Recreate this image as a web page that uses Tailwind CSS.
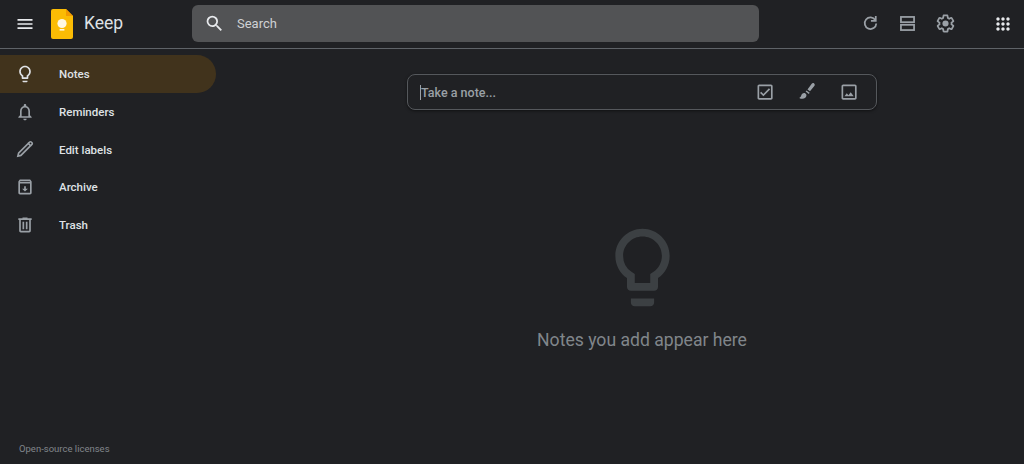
<!DOCTYPE html>
<html lang="en">
  <head>
    <meta charset="UTF-8" />
    <meta name="viewport" content="width=device-width, initial-scale=1.0" />
    <title>Keep</title>
    <script src="https://cdn.jsdelivr.net/npm/@tailwindcss/browser@4"></script>
  </head>
  <body class="m-0 h-[464px] w-[1024px] overflow-hidden bg-[#202124] font-['Roboto',sans-serif]">
    <!-- top bar -->
    <header class="flex h-[49px] items-center border-b border-[#5f6368] pb-[1px]">
      <button class="ml-[15px] flex h-5 w-5 items-center justify-center text-[#e8eaed]">
        <svg class="h-5 w-5" viewBox="0 0 24 24" fill="currentColor"><path d="M3 18h18v-2H3v2zm0-5h18v-2H3v2zm0-7v2h18V6H3z" /></svg>
      </button>
      <svg class="ml-[16px] h-[30px] w-[22px]" viewBox="0 0 22 30">
        <path d="M2 0h13l7 7v21a2 2 0 0 1-2 2H2a2 2 0 0 1-2-2V2a2 2 0 0 1 2-2z" fill="#fbbc04" />
        <path d="M15 0l7 7h-7z" fill="#f29900" />
        <circle cx="11" cy="14.500" r="4.600" fill="#fff8e1" />
        <rect x="8.600" y="20" width="4.800" height="1.600" fill="#fff8e1" />
      </svg>
      <span class="ml-[11px] w-[108px] text-[17.5px] leading-none text-[#dfe1e5]">Keep</span>
      <div class="flex h-[37px] w-[567px] items-center rounded-[6px] bg-[#525355]">
        <svg class="ml-[12px] h-[21px] w-[21px] text-[#e8eaed]" viewBox="0 0 24 24" fill="currentColor"><path d="M15.500 14h-.79l-.28-.27A6.470 6.470 0 0 0 16 9.500 6.500 6.500 0 1 0 9.500 16c1.610 0 3.090-.59 4.230-1.570l.27.28v.79l5 4.990L20.490 19l-4.990-5zm-6 0C7.010 14 5 11.990 5 9.500S7.010 5 9.500 5 14 7.010 14 9.500 11.990 14 9.500 14z" /></svg>
        <span class="ml-[12px] text-[13px] text-[#cfd1d4]">Search</span>
      </div>
      <div class="ml-[100.500px] flex items-center gap-[16.500px] text-[#9aa0a6]">
        <svg class="h-[21px] w-[21px]" viewBox="0 0 24 24" fill="none" stroke="currentColor" stroke-width="2"><path d="M17.600 8.200A6.600 6.600 0 1 0 18.600 12" /><path d="M18 3.500v5.500h-5.500" fill="none" /></svg>
        <svg class="h-[21px] w-[21px]" viewBox="0 0 24 24" fill="none" stroke="currentColor" stroke-width="2"><rect x="4.500" y="4.500" width="15" height="6" /><rect x="4.500" y="13.500" width="15" height="6" /></svg>
        <svg class="h-[21px] w-[21px]" viewBox="0 0 24 24" fill="currentColor"><path d="M13.850 22.250h-3.700c-.74 0-1.360-.54-1.450-1.270l-.27-1.890c-.27-.14-.53-.29-.79-.46l-1.800.72c-.7.26-1.470-.03-1.810-.65L2.200 15.530c-.35-.66-.2-1.440.36-1.880l1.530-1.190c-.01-.15-.02-.3-.02-.46 0-.15.01-.31.02-.46l-1.520-1.190c-.59-.45-.74-1.260-.37-1.880l1.850-3.190c.34-.62 1.110-.9 1.790-.63l1.810.73c.26-.17.52-.32.78-.46l.27-1.910c.09-.7.71-1.250 1.440-1.250h3.700c.74 0 1.360.54 1.450 1.270l.27 1.890c.27.14.53.29.79.46l1.800-.72c.71-.26 1.480.03 1.820.65l1.840 3.180c.36.66.2 1.440-.36 1.880l-1.520 1.190c.01.15.02.3.02.46s-.01.31-.02.46l1.520 1.190c.56.45.72 1.230.37 1.860l-1.860 3.220c-.34.62-1.110.9-1.800.63l-1.800-.72c-.26.17-.52.32-.78.46l-.27 1.910c-.1.68-.72 1.220-1.460 1.220zm-3.230-2h2.760l.37-2.550.53-.22c.44-.18.88-.44 1.340-.78l.45-.34 2.380.96 1.380-2.400-2.030-1.580.07-.56c.03-.26.06-.51.06-.78s-.03-.53-.06-.78l-.07-.56 2.030-1.580-1.390-2.400-2.390.96-.45-.35c-.42-.32-.87-.58-1.330-.77l-.52-.22-.37-2.550h-2.760l-.37 2.550-.53.21c-.44.19-.88.44-1.340.79l-.45.33-2.380-.95-1.390 2.390 2.030 1.580-.07.56a7 7 0 0 0-.06.79c0 .26.02.53.06.78l.07.56-2.030 1.580 1.380 2.400 2.390-.96.45.35c.43.33.86.58 1.330.77l.53.22.38 2.550z" /><circle cx="12" cy="12" r="3.500" /></svg>
      </div>
      <svg class="ml-[37.500px] h-5 w-5 text-[#e8eaed]" viewBox="0 0 24 24" fill="currentColor"><path d="M6 8c1.100 0 2-.9 2-2s-.9-2-2-2-2 .9-2 2 .9 2 2 2zm6 12c1.100 0 2-.9 2-2s-.9-2-2-2-2 .9-2 2 .9 2 2 2zm-6 0c1.100 0 2-.9 2-2s-.9-2-2-2-2 .9-2 2 .9 2 2 2zm0-6c1.100 0 2-.9 2-2s-.9-2-2-2-2 .9-2 2 .9 2 2 2zm6 0c1.100 0 2-.9 2-2s-.9-2-2-2-2 .9-2 2 .9 2 2 2zm4-8c0 1.100.9 2 2 2s2-.9 2-2-.9-2-2-2-2 .9-2 2zm-4 2c1.100 0 2-.9 2-2s-.9-2-2-2-2 .9-2 2 .9 2 2 2zm6 6c1.100 0 2-.9 2-2s-.9-2-2-2-2 .9-2 2 .9 2 2 2zm0 6c1.100 0 2-.9 2-2s-.9-2-2-2-2 .9-2 2 .9 2 2 2z" /></svg>
    </header>

    <div class="flex h-[415px]">
      <!-- sidebar -->
      <aside class="flex w-[216px] shrink-0 flex-col pt-[6px]">
        <nav class="flex flex-col text-[11.500px] font-medium text-[#dfe1e5]">
          <a class="flex h-[38px] items-center rounded-r-full bg-[#41331c]">
            <svg class="ml-[15px] h-5 w-5" viewBox="0 0 24 24" fill="currentColor"><path d="M9 21c0 .55.45 1 1 1h4c.55 0 1-.45 1-1v-1H9v1zm3-19C8.140 2 5 5.140 5 9c0 2.380 1.190 4.470 3 5.740V17c0 .55.45 1 1 1h6c.55 0 1-.45 1-1v-2.260c1.810-1.270 3-3.360 3-5.740 0-3.860-3.140-7-7-7zm2.850 11.100l-.85.6V16h-4v-2.300l-.85-.6A4.997 4.997 0 0 1 7 9c0-2.760 2.240-5 5-5s5 2.240 5 5c0 1.630-.8 3.160-2.150 4.100z" /></svg>
            <span class="ml-[24px] pt-[2px]">Notes</span>
          </a>
          <a class="flex h-[37.600px] items-center">
            <svg class="ml-[15px] h-5 w-5 text-[#9aa0a6]" viewBox="0 0 24 24" fill="currentColor"><path d="M12 22c1.100 0 2-.9 2-2h-4c0 1.100.9 2 2 2zm6-6v-5c0-3.070-1.630-5.640-4.500-6.320V4c0-.83-.67-1.500-1.500-1.500s-1.500.67-1.500 1.500v.68C7.640 5.360 6 7.920 6 11v5l-2 2v1h16v-1l-2-2zm-2 1H8v-6c0-2.480 1.510-4.500 4-4.500s4 2.020 4 4.500v6z" /></svg>
            <span class="ml-[24px] pt-[2px]">Reminders</span>
          </a>
          <a class="flex h-[37.600px] items-center">
            <svg class="ml-[14px] h-[22px] w-[22px] text-[#9aa0a6]" viewBox="0 0 24 24" fill="none" stroke="currentColor" stroke-width="1.800"><path d="M5 16.500 15.600 5.900l2.500 2.500L7.500 19l-3.300.8z" /><path d="M15.600 5.900l1.500-1.500a1.200 1.200 0 0 1 1.700 0l.8.8a1.200 1.200 0 0 1 0 1.700l-1.500 1.500" /></svg>
            <span class="ml-[23px] pt-[2px]">Edit labels</span>
          </a>
          <a class="flex h-[37.600px] items-center">
            <svg class="ml-[15px] h-5 w-5 text-[#9aa0a6]" viewBox="0 0 24 24" fill="currentColor"><path d="M20 5.500 18.700 3.600C18.400 3.200 18 3 17.500 3h-11c-.5 0-.9.2-1.200.6L4 5.500V19c0 1.100.9 2 2 2h12c1.100 0 2-.9 2-2V5.500zM6.500 4.800h11l.7 1H5.800zM6 19V7.800h12V19H6zm7-8h-2v3H8.500l3.500 3.500 3.500-3.500H13v-3z" /></svg>
            <span class="ml-[24px] pt-[2px]">Archive</span>
          </a>
          <a class="flex h-[37.600px] items-center">
            <svg class="ml-[15px] h-5 w-5 text-[#9aa0a6]" viewBox="0 0 24 24" fill="currentColor"><path d="M15 4V3H9v1H4v2h1v13c0 1.100.9 2 2 2h10c1.100 0 2-.9 2-2V6h1V4h-5zm2 15H7V6h10v13z" /><path d="M9 8h2v9H9zm4 0h2v9h-2z" /></svg>
            <span class="ml-[24px] pt-[2px]">Trash</span>
          </a>
        </nav>
        <span class="mt-auto mb-[9px] ml-[19px] text-[9.500px] leading-[12px] text-[#80868b]">Open-source licenses</span>
      </aside>

      <!-- main column -->
      <main class="flex flex-1 flex-col items-center pl-[44px] pt-[25px]">
        <div class="flex h-[36px] w-[470px] items-center rounded-[8px] border border-[#55585c] bg-[#202124] shadow-[0_1px_3px_rgba(0,0,0,0.5)]">
          <span class="ml-[12px] h-[15px] w-px bg-[#9aa0a6]"></span>
          <span class="pt-[3px] text-[12.500px] font-medium text-[#9aa0a6]">Take a note...</span>
          <div class="ml-auto mr-[15px] flex items-center gap-[18px] text-[#9aa0a6]">
            <svg class="h-6 w-6" viewBox="0 0 24 24" fill="currentColor"><path d="M19 3H5c-1.100 0-2 .9-2 2v14c0 1.100.9 2 2 2h14c1.100 0 2-.9 2-2V5c0-1.100-.9-2-2-2zm0 16H5V5h14v14zM17.990 9l-1.410-1.420-6.590 6.590-2.580-2.570-1.420 1.410 4 3.990z" transform="translate(2 2) scale(.84)" /></svg>
            <svg class="h-6 w-6" viewBox="0 0 24 24" fill="currentColor"><path d="M12.500 9.500 16.500 4c.7-1 1.800-1.200 2.600-.6s.8 1.700.2 2.600l-4.300 5.300zM11.500 10.500l3.200 2.300-.9 1.100-3.200-2.300zM9.900 13c-1.800-.4-3.300.6-3.600 2.300-.2 1.300-.8 2-2 2.600 1.900 1.200 4.600 1.100 6-.2 1-.9 1.500-2.400.9-3.500z" /></svg>
            <svg class="h-6 w-6" viewBox="0 0 24 24" fill="currentColor"><path d="M19 3H5c-1.100 0-2 .9-2 2v14c0 1.100.9 2 2 2h14c1.100 0 2-.9 2-2V5c0-1.100-.9-2-2-2zm0 16H5V5h14v14zm-5.040-6.710-2.750 3.540-1.960-2.360L6.500 17h11l-3.540-4.710z" transform="translate(2 2) scale(.84)" /></svg>
          </div>
        </div>

        <svg class="mt-[111px] h-[93px] w-[93px] text-[#3c4043]" viewBox="0 0 24 24" fill="currentColor"><path d="M9 21c0 .55.45 1 1 1h4c.55 0 1-.45 1-1v-1H9v1zm3-19C8.140 2 5 5.140 5 9c0 2.380 1.190 4.470 3 5.740V17c0 .55.45 1 1 1h6c.55 0 1-.45 1-1v-2.260c1.810-1.270 3-3.360 3-5.740 0-3.860-3.140-7-7-7zm2.850 11.100l-.85.6V16h-4v-2.300l-.85-.6A4.997 4.997 0 0 1 7 9c0-2.760 2.240-5 5-5s5 2.240 5 5c0 1.630-.8 3.160-2.150 4.100z" /></svg>
        <p class="mt-[14px] text-[17.600px] leading-[24px] text-[#80868b]">Notes you add appear here</p>
      </main>
    </div>
  </body>
</html>
